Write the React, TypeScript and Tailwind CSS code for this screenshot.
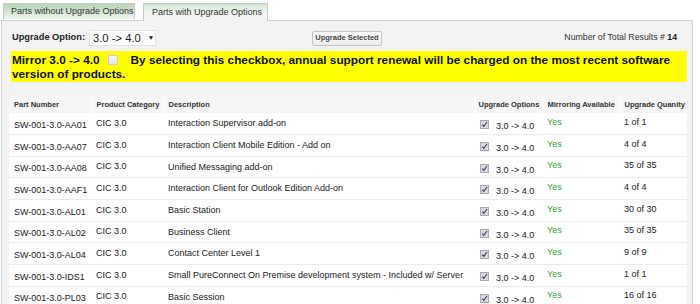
import React from 'react';

const rows = [
  ['SW-001-3.0-AA01', 'Interaction Supervisor add-on', '1 of 1'],
  ['SW-001-3.0-AA07', 'Interaction Client Mobile Edition - Add on', '4 of 4'],
  ['SW-001-3.0-AA08', 'Unified Messaging add-on', '35 of 35'],
  ['SW-001-3.0-AAF1', 'Interaction Client for Outlook Edition Add-on', '4 of 4'],
  ['SW-001-3.0-AL01', 'Basic Station', '30 of 30'],
  ['SW-001-3.0-AL02', 'Business Client', '35 of 35'],
  ['SW-001-3.0-AL04', 'Contact Center Level 1', '9 of 9'],
  ['SW-001-3.0-IDS1', 'Small PureConnect On Premise development system - Included w/ Server', '1 of 1'],
  ['SW-001-3.0-PL03', 'Basic Session', '16 of 16'],
];

const CheckedBox = () => (
  <span className="flex items-center justify-center w-[9px] h-[9px] border border-[#a9a9a9] bg-[#d9d9d9]">
    <svg width="7" height="7" viewBox="0 0 7 7">
      <path d="M1.3 3.6 L2.8 5.3 L6 1" fill="none" stroke="#283a8c" strokeWidth="1.1" />
    </svg>
  </span>
);

export default function App() {
  return (
    <div className="w-[700px] h-[304px] overflow-hidden bg-white [font-family:'Liberation_Sans',Arial,sans-serif] text-[#222]">
      {/* Tabs */}
      <div className="flex items-end pl-[3px] h-[20px]">
        <div className="h-[16px] w-[132px] pl-[7px] flex items-center whitespace-nowrap text-[9px] text-[#333] border border-b-0 border-[#c9c9c9] bg-gradient-to-b from-[#b7d7b7] to-[#eef5ee] mb-[1px]">
          Parts without Upgrade Options
        </div>
        <div className="ml-[8px] h-[18px] w-[125px] pl-[8px] flex items-center whitespace-nowrap text-[9px] text-[#333] border border-b-0 border-[#c9c9c9] bg-gradient-to-b from-[#cfe6cf] via-[#f1f5f1] to-[#f3f3f3] relative top-[1px] z-10">
          Parts with Upgrade Options
        </div>
      </div>

      {/* Panel */}
      <div className="ml-[1px] w-[692px] h-[290px] border border-[#d2d2d2] bg-[#f3f3f3] pl-[7px] pt-[9px]">
        <div className="flex items-center h-[16px] w-[678px]">
          <span className="ml-[3px] text-[9.25px] font-bold whitespace-nowrap">Upgrade Option:</span>
          <div className="ml-[4px] h-[16px] w-[67px] bg-white border border-[#e2e2e2] flex items-center pl-[3px] text-[11.25px] text-[#222] whitespace-nowrap">
            3.0 -&gt; 4.0
            <span className="ml-[7px] text-[6.5px]">▼</span>
          </div>
          <button className="ml-[156px] h-[15px] w-[70px] border border-[#c4c4c4] rounded-[2px] bg-gradient-to-b from-white to-[#ececec] text-[7.5px] font-bold text-[#444] leading-none whitespace-nowrap">
            Upgrade Selected
          </button>
          <span className="ml-auto mr-[10px] text-[8.75px] text-[#333] whitespace-nowrap">
            Number of Total Results # <b className="text-[#222]">14</b>
          </span>
        </div>

        <div className="mt-[5px] ml-[2px] w-[676px] h-[31px] bg-[#ffff00] pl-[1px] pt-[2px] text-[11.8px] font-bold leading-[14px] text-[#111]">
          Mirror 3.0 -&gt; 4.0
          <span className="inline-block align-[-1px] ml-[8px] mr-[13px] w-[10px] h-[10px] border border-[#cfcfcf] bg-gradient-to-b from-[#f7f7f7] to-[#e4e4e4]" />
          By selecting this checkbox, annual support renewal will be charged on the most recent software version of products.
        </div>

        <table className="mt-[13px] w-[678px] table-fixed border-collapse text-[9px] leading-[11px]">
          <colgroup>
            <col className="w-[83px]" />
            <col className="w-[71px]" />
            <col className="w-[312px]" />
            <col className="w-[67px]" />
            <col className="w-[77px]" />
            <col className="w-[68px]" />
          </colgroup>
          <thead>
            <tr className="h-[18px] text-[7.5px] font-bold text-[#333] text-left whitespace-nowrap align-middle">
              <th className="pl-[5px] bg-[#f5f5f5] border-r border-white">Part Number</th>
              <th className="pl-[4px] bg-[#f5f5f5] border-r border-white">Product Category</th>
              <th className="pl-[5px] bg-[#f5f5f5] border-r border-white">Description</th>
              <th className="pl-[3px] bg-[#f5f5f5] border-r border-white">Upgrade Options</th>
              <th className="pl-[5px] bg-[#f5f5f5] border-r border-white">Mirroring Available</th>
              <th className="pl-[5px] bg-[#f5f5f5]">Upgrade Quanity</th>
            </tr>
          </thead>
          <tbody>
            {rows.map(([part, desc, qty]) => (
              <tr key={part} className="h-[21.67px] bg-white border-b border-[#ececec] align-top whitespace-nowrap">
                <td className="pl-[5px] pt-[6.5px]">{part}</td>
                <td className="pl-[4px] pt-[4.5px]">CIC 3.0</td>
                <td className="pl-[5px] pt-[5px]">{desc}</td>
                <td className="pl-[5px] pt-[7px]">
                  <span className="flex items-start">
                    <CheckedBox />
                    <span className="ml-[7px] mt-[1px] leading-[11px]">3.0 -&gt; 4.0</span>
                  </span>
                </td>
                <td className="pl-[5px] pt-[3.5px] text-[#34a834]">Yes</td>
                <td className="pl-[5px] pt-[3.5px]">{qty}</td>
              </tr>
            ))}
          </tbody>
        </table>
      </div>
    </div>
  );
}
